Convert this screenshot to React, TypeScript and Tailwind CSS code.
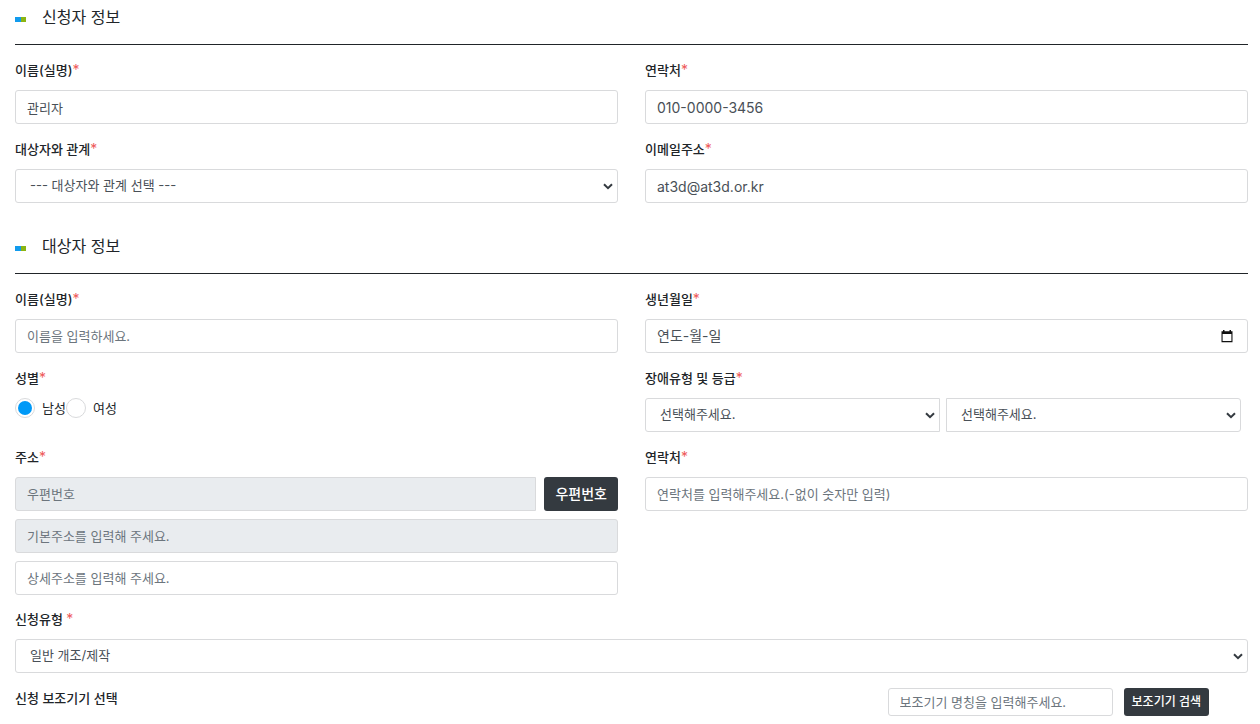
import { useId, useState } from 'react';
import type { InputHTMLAttributes, ReactNode, SelectHTMLAttributes } from 'react';

const controlClass =
  'block h-[34px] w-full min-w-0 border border-[#d9dadc] px-[11px] text-[#495057] outline-none placeholder:text-[#6c757d] placeholder:opacity-100 focus:border-[#80bdff]';

type TextInputProps = InputHTMLAttributes<HTMLInputElement>;

const TextInput = ({ className = 'rounded-[3px]', readOnly, ...props }: TextInputProps) => (
  <input
    type="text"
    readOnly={readOnly}
    className={`${controlClass} ${readOnly ? 'bg-[#e9ecef]' : 'bg-white'} ${className}`}
    {...props}
  />
);

type SelectBoxProps = SelectHTMLAttributes<HTMLSelectElement> & { options: string[] };

const SelectBox = ({ options, className = 'rounded-[3px]', ...props }: SelectBoxProps) => (
  <div className="grid w-full min-w-0 items-center">
    <select
      className={`col-start-1 row-start-1 h-[34px] w-full appearance-none border border-[#d9dadc] bg-white px-[14px] text-[#495057] outline-none ${className}`}
      {...props}
    >
      {options.map((option) => (
        <option key={option}>{option}</option>
      ))}
    </select>
    <svg
      viewBox="0 0 10 7"
      aria-hidden="true"
      className="pointer-events-none col-start-1 row-start-1 mr-[5px] h-[7px] w-[10px] justify-self-end"
    >
      <path d="M1 1.2 5 5.2 9 1.2" fill="none" stroke="#343a40" strokeWidth="2" />
    </svg>
  </div>
);

const Required = () => <span className="text-sm leading-none font-normal text-[#ee5a5a]">*</span>;

type FieldProps = { label: ReactNode; htmlFor: string; required?: boolean; children: ReactNode };

const Field = ({ label, htmlFor, required = true, children }: FieldProps) => (
  <div className="min-w-0">
    <label htmlFor={htmlFor} className="mb-[10px] block h-[19px] leading-[19px] font-medium text-[#212529]">
      {label}
      {required && <Required />}
    </label>
    {children}
  </div>
);

const SectionTitle = ({ children }: { children: ReactNode }) => (
  <header className="mb-4 flex h-[45px] items-start gap-4 border-b border-[#212529] pt-1">
    <span className="mt-[13px] flex h-[5px] w-[11px]" aria-hidden="true">
      <span className="w-[6px] bg-[#129bed]" />
      <span className="flex-1 bg-[#8bb512]" />
    </span>
    <h2 className="text-base leading-[26px] text-[#212529]">{children}</h2>
  </header>
);

const CalendarIcon = () => (
  <svg viewBox="0 0 12 13" className="h-[13px] w-3" aria-hidden="true">
    <path d="M2 0h1.5v1.2h5V0H10v1.2h1.5v11H.5v-11H2zM1.6 4v7.1h8.8V4z" fill="#111" fillRule="evenodd" />
  </svg>
);

type GenderRadioProps = { label: string; checked: boolean; onSelect: () => void; id?: string };

const GenderRadio = ({ label, checked, onSelect, id }: GenderRadioProps) => (
  <label className="flex items-center gap-[7px] text-[#212529]">
    <input
      id={id}
      type="radio"
      name="gender"
      checked={checked}
      onChange={onSelect}
      className="size-5 appearance-none rounded-full border border-[#d9dadc] bg-white p-[2px] before:block before:size-full before:rounded-full checked:before:bg-[#0099f7]"
    />
    <span className="leading-5">{label}</span>
  </label>
);

export default function App() {
  const id = useId();
  const [gender, setGender] = useState('남성');

  return (
    <form className="bg-white pr-3 pb-2 pl-[15px] font-['Inter','Noto_Sans_CJK_KR',sans-serif] text-[13px] text-[#212529]">
      <section>
        <SectionTitle>신청자 정보</SectionTitle>
        <div className="grid grid-cols-2 gap-x-[27px] gap-y-4">
          <Field label="이름(실명)" htmlFor={`${id}-name`}>
            <TextInput id={`${id}-name`} defaultValue="관리자" />
          </Field>
          <Field label="연락처" htmlFor={`${id}-phone`}>
            <TextInput
              id={`${id}-phone`}
              type="tel"
              defaultValue="010-0000-3456"
              className="rounded-[3px] text-sm"
            />
          </Field>
          <Field label="대상자와 관계" htmlFor={`${id}-relation`}>
            <SelectBox id={`${id}-relation`} options={['--- 대상자와 관계 선택 ---']} />
          </Field>
          <Field label="이메일주소" htmlFor={`${id}-email`}>
            <TextInput
              id={`${id}-email`}
              type="email"
              defaultValue="at3d@at3d.or.kr"
              className="rounded-[3px] text-sm"
            />
          </Field>
        </div>
      </section>

      <section className="mt-[26px]">
        <SectionTitle>대상자 정보</SectionTitle>
        <div className="grid grid-cols-2 gap-x-[27px] gap-y-4">
          <Field label="이름(실명)" htmlFor={`${id}-target-name`}>
            <TextInput id={`${id}-target-name`} placeholder="이름을 입력하세요." />
          </Field>
          <Field label="생년월일" htmlFor={`${id}-birth`}>
            <div className="flex h-[34px] items-center rounded-[3px] border border-[#d9dadc] bg-white pr-[14px] pl-[11px]">
              <input
                id={`${id}-birth`}
                type="text"
                placeholder="연도-월-일"
                className="min-w-0 flex-1 text-sm text-[#495057] outline-none placeholder:text-[#495057] placeholder:opacity-100"
              />
              <button type="button" aria-label="날짜 선택">
                <CalendarIcon />
              </button>
            </div>
          </Field>
          <Field label="성별" htmlFor={`${id}-gender`}>
            <div className="flex">
              <GenderRadio
                id={`${id}-gender`}
                label="남성"
                checked={gender === '남성'}
                onSelect={() => setGender('남성')}
              />
              <GenderRadio label="여성" checked={gender === '여성'} onSelect={() => setGender('여성')} />
            </div>
          </Field>
          <Field label="장애유형 및 등급" htmlFor={`${id}-type`}>
            <div className="flex gap-[6px] pr-[7px]">
              <SelectBox id={`${id}-type`} options={['선택해주세요.']} className="rounded-l-[3px]" />
              <SelectBox aria-label="장애 등급" options={['선택해주세요.']} className="rounded-r-[3px]" />
            </div>
          </Field>
          <Field label="주소" htmlFor={`${id}-zip`}>
            <div className="flex flex-col gap-2">
              <div className="flex gap-2">
                <TextInput id={`${id}-zip`} placeholder="우편번호" readOnly className="rounded-l-[3px]" />
                <button
                  type="button"
                  className="h-[34px] shrink-0 rounded-[3px] bg-[#343a40] px-[11px] text-sm font-medium text-white"
                >
                  우편번호
                </button>
              </div>
              <TextInput aria-label="기본주소" placeholder="기본주소를 입력해 주세요." readOnly />
              <TextInput aria-label="상세주소" placeholder="상세주소를 입력해 주세요." />
            </div>
          </Field>
          <Field label="연락처" htmlFor={`${id}-target-phone`}>
            <TextInput
              id={`${id}-target-phone`}
              type="tel"
              placeholder="연락처를 입력해주세요.(-없이 숫자만 입력)"
            />
          </Field>
        </div>
      </section>

      <div className="mt-[15px] flex flex-col gap-[15px]">
        <Field label="신청유형 " htmlFor={`${id}-request`}>
          <SelectBox id={`${id}-request`} options={['일반 개조/제작']} />
        </Field>
        <div className="flex items-start pr-[39px]">
          <label htmlFor={`${id}-device`} className="flex-1 leading-[21px] font-medium">
            신청 보조기기 선택
          </label>
          <input
            id={`${id}-device`}
            type="text"
            placeholder="보조기기 명칭을 입력해주세요."
            className="h-7 w-[225px] rounded-[3px] border border-[#d9dadc] px-[11px] text-[#495057] outline-none placeholder:text-[#6c757d] placeholder:opacity-100"
          />
          <button
            type="button"
            className="ml-[11px] h-7 rounded-[3px] bg-[#343a40] px-2 text-xs font-medium text-white"
          >
            보조기기 검색
          </button>
        </div>
      </div>
    </form>
  );
}
